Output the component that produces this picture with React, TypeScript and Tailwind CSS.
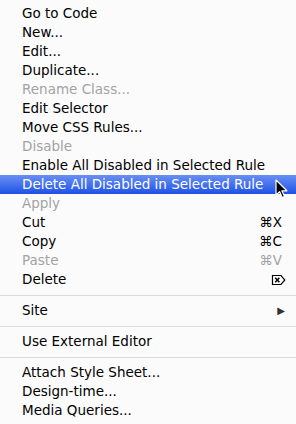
import { Fragment } from "react";

type Item =
  | { sep: true }
  | { label: string; off?: boolean; hot?: boolean; key?: string; del?: boolean; sub?: boolean };

const ITEMS: Item[] = [
  { label: "Go to Code" },
  { label: "New..." },
  { label: "Edit..." },
  { label: "Duplicate..." },
  { label: "Rename Class...", off: true },
  { label: "Edit Selector" },
  { label: "Move CSS Rules..." },
  { label: "Disable", off: true },
  { label: "Enable All Disabled in Selected Rule" },
  { label: "Delete All Disabled in Selected Rule", hot: true },
  { label: "Apply", off: true },
  { label: "Cut", key: "⌘X" },
  { label: "Copy", key: "⌘C" },
  { label: "Paste", key: "⌘V", off: true },
  { label: "Delete", del: true },
  { sep: true },
  { label: "Site", sub: true },
  { sep: true },
  { label: "Use External Editor" },
  { sep: true },
  { label: "Attach Style Sheet..." },
  { label: "Design-time..." },
  { label: "Media Queries..." },
];

function DelKey() {
  return (
    <svg width="15" height="12" viewBox="0 0 15 12">
      <path d="M1.5 1.5h8.5l3.8 4.5-3.8 4.5h-8.5z" fill="#fff" stroke="#000" strokeWidth="1.2" />
      <path d="M4.2 3.8l4.2 4.4M8.4 3.8l-4.2 4.4" stroke="#000" strokeWidth="1.5" />
    </svg>
  );
}

function Cursor() {
  return (
    <svg className="absolute left-[275px] top-[179px]" width="14" height="21" viewBox="0 0 14 21">
      <path d="M1 1v15l3.6-3.4 2.6 6 2.3-1-2.6-5.8h5z" fill="#000" stroke="#fff" strokeWidth="1.2" strokeLinejoin="round" />
    </svg>
  );
}

export default function App() {
  return (
    <div className="relative h-[424px] w-[296px] overflow-hidden bg-[#fbfbfb] pt-[4px] text-[13.5px] leading-[19px] text-black" style={{ fontFamily: '"DejaVu Sans", "Liberation Sans", sans-serif' }}>
      {ITEMS.map((it, i) => {
        if ("sep" in it) {
          return (
            <div key={i} className="flex h-[12px] items-center">
              <div className="h-px w-full bg-[#dcdcdc]" />
            </div>
          );
        }
        return (
          <Fragment key={i}>
            <div className={`flex h-[19px] items-center pl-[22px] pr-[10px] ${it.hot ? "bg-gradient-to-b from-[#6a8ff2] to-[#1f4fe6] text-white" : ""} ${it.off ? "text-[#a3a3a3]" : ""}`}>
              <span className="flex-1">{it.label}</span>
              {it.key && <span className={`pr-[4px] ${it.off ? "text-[#a3a3a3]" : "text-black"}`}>{it.key}</span>}
              {it.del && <span className="flex"><DelKey /></span>}
              {it.sub && <span className="pr-[1px] text-[10px] text-[#333]">▶</span>}
            </div>
          </Fragment>
        );
      })}
      <Cursor />
    </div>
  );
}
